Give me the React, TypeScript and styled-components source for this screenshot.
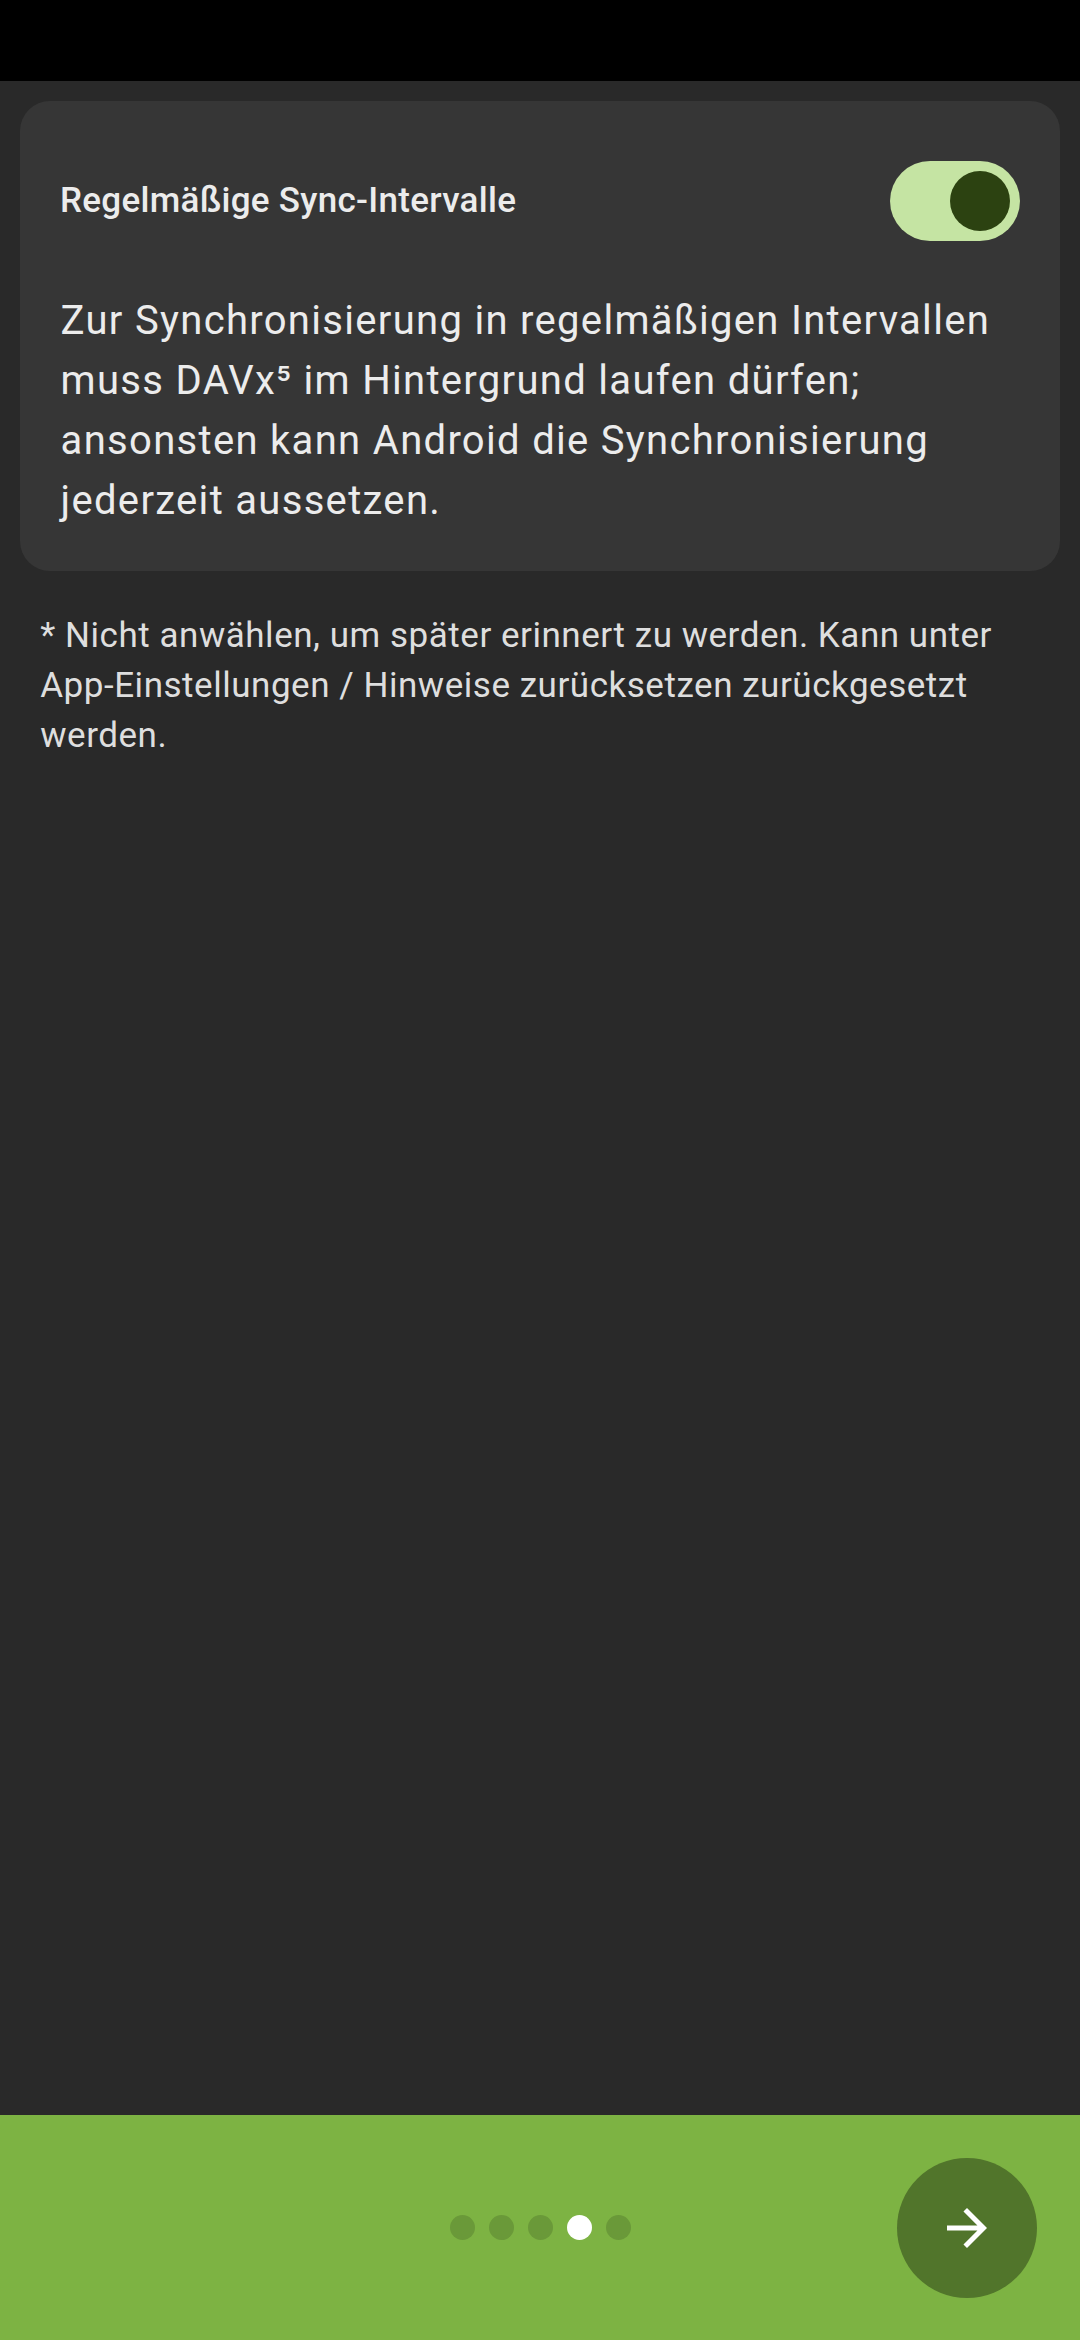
import React, { useState } from "react";
import styled, { createGlobalStyle } from "styled-components";

const GlobalStyle = createGlobalStyle`
  *, *::before, *::after { box-sizing: border-box; }
  body { margin: 0; background: #292929; }
`;

const Screen = styled.div`
  display: flex;
  flex-direction: column;
  width: 1080px;
  height: 2340px;
  background: #292929;
  font-family: Roboto, "Noto Sans", sans-serif;
  color: #ececec;
`;

const StatusBar = styled.div`
  height: 81px;
  flex: none;
  background: #000;
`;

const Content = styled.main`
  flex: 1;
  padding: 20px;
`;

const Card = styled.section`
  height: 470px;
  padding: 60px 40px 40px;
  border-radius: 30px;
  background: #363636;
`;

const CardHeader = styled.div`
  display: flex;
  align-items: center;
  justify-content: space-between;
  height: 80px;
`;

const Title = styled.h1`
  margin: 0;
  font-size: 35px;
  line-height: 50px;
  font-weight: 500;
  letter-spacing: 0.29px;
`;

const Switch = styled.button<{ $on: boolean }>`
  display: flex;
  align-items: center;
  justify-content: ${(p) => (p.$on ? "flex-end" : "flex-start")};
  width: 130px;
  height: 80px;
  padding: 0 10px;
  border: 0;
  border-radius: 40px;
  background: ${(p) => (p.$on ? "#c5e4a3" : "#4a4a4a")};
`;

const Thumb = styled.span`
  width: 60px;
  height: 60px;
  border-radius: 50%;
  background: #2c4211;
`;

const Description = styled.p`
  margin: 50px 0 0;
  padding-left: 0.6px;
  font-size: 40px;
  line-height: 60px;
  letter-spacing: 1.31px;
`;

const Note = styled.p`
  margin: 40px 20px 0;
  padding-left: 0.25px;
  font-size: 35px;
  line-height: 50px;
  letter-spacing: 0.53px;
  color: #dedede;
`;

const Footer = styled.footer`
  display: grid;
  grid-template-columns: 1fr auto 1fr;
  align-items: center;
  flex: none;
  height: 225px;
  padding: 0 43px 0 44px;
  background: #7db343;
`;

const Dots = styled.div`
  grid-column: 2;
  display: flex;
  gap: 14px;
`;

const Dot = styled.span<{ $active: boolean }>`
  width: 25px;
  height: 25px;
  border-radius: 50%;
  background: ${(p) => (p.$active ? "#fff" : "#6a9939")};
`;

const NextButton = styled.button`
  display: flex;
  align-items: center;
  justify-content: center;
  justify-self: end;
  width: 140px;
  height: 140px;
  padding: 0;
  border: 0;
  border-radius: 50%;
  background: #51752b;
`;

export default function App() {
  const [enabled, setEnabled] = useState(true);
  return (
    <>
      <GlobalStyle />
      <Screen>
        <StatusBar />
        <Content>
          <Card>
            <CardHeader>
              <Title>Regelmäßige Sync-Intervalle</Title>
              <Switch
                $on={enabled}
                role="switch"
                aria-checked={enabled}
                onClick={() => setEnabled(!enabled)}
              >
                <Thumb />
              </Switch>
            </CardHeader>
            <Description>
              Zur Synchronisierung in regelmäßigen Intervallen muss DAVx⁵ im
              Hintergrund laufen dürfen; ansonsten kann Android die
              Synchronisierung jederzeit aussetzen.
            </Description>
          </Card>
          <Note>
            * Nicht anwählen, um später erinnert zu werden. Kann unter
            App-Einstellungen / Hinweise zurücksetzen zurückgesetzt werden.
          </Note>
        </Content>
        <Footer>
          <Dots>
            {[0, 1, 2, 3, 4].map((page) => (
              <Dot key={page} $active={page === 3} />
            ))}
          </Dots>
          <NextButton>
            <svg width="60" height="60" viewBox="0 0 24 24" fill="#fff">
              <path d="M12 4l-1.41 1.41L16.17 11H4v2h12.17l-5.58 5.59L12 20l8-8z" />
            </svg>
          </NextButton>
        </Footer>
      </Screen>
    </>
  );
}
